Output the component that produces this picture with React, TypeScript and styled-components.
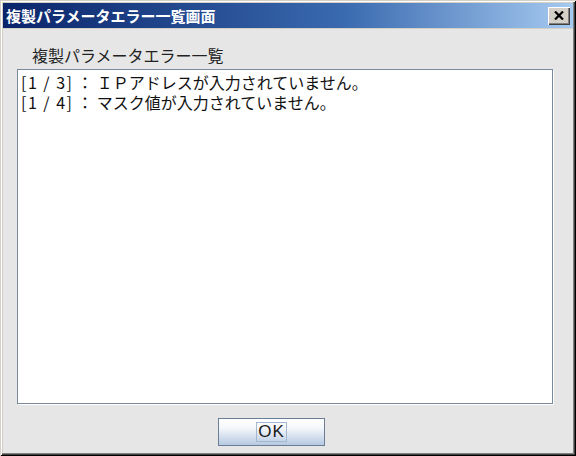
import React from 'react'
import styled, { createGlobalStyle } from 'styled-components'

const GlobalStyle = createGlobalStyle`
  html, body {
    margin: 0;
    padding: 0;
    background: #d4d0c8;
  }
  body {
    font-family: "Noto Sans CJK JP", "Noto Sans", sans-serif;
  }
`

const Window = styled.div`
  width: 576px;
  height: 456px;
  box-sizing: border-box;
  display: flex;
  flex-direction: column;
  background: #d4d0c8;
  padding: 3px;
  box-shadow:
    inset 1px 1px 0 #d4d0c8,
    inset -1px -1px 0 #000000,
    inset 2px 2px 0 #ffffff,
    inset -2px -2px 0 #404040,
    inset -3px -3px 0 #808080;
`

const TitleBar = styled.div`
  height: 25px;
  flex: none;
  display: flex;
  align-items: center;
  justify-content: space-between;
  padding: 0 3px;
  background: linear-gradient(to right, #0a246a 0%, #3a6ab0 60%, #a6caf0 100%);
`

const Title = styled.span`
  color: #ffffff;
  font-weight: 700;
  font-size: 15px;
  line-height: 25px;
`

const CloseButton = styled.button`
  width: 22px;
  height: 18px;
  padding: 0;
  margin: 0;
  border: none;
  background: #d4d0c8;
  display: flex;
  align-items: center;
  justify-content: center;
  box-shadow:
    inset 1px 1px 0 #ffffff,
    inset -1px -1px 0 #404040,
    inset -2px -2px 0 #808080;
`

const Body = styled.div`
  flex: 1;
  display: flex;
  flex-direction: column;
  background: #e6e6e6;
  padding: 0 20px 0 14px;
  border-top: 1px solid #d4d0c8;
`

const Caption = styled.div`
  font-size: 16px;
  line-height: 20px;
  color: #222222;
  padding: 16px 0 4px 15px;
`

const MessageList = styled.div`
  height: 335px;
  box-sizing: border-box;
  background: #ffffff;
  border: 1px solid #7a8a9c;
  box-shadow: 1px 1px 0 #ffffff;
  padding: 2px 3px;
  font-size: 16px;
  line-height: 20px;
  color: #111111;
`

const MessageLine = styled.div`
  white-space: pre;
`

const Index = styled.span`
  letter-spacing: 1.5px;
`

const ButtonRow = styled.div`
  display: flex;
  justify-content: center;
  padding: 14px 27px 0 0;
`

const OkButton = styled.button`
  width: 107px;
  height: 28px;
  box-sizing: border-box;
  border: 1px solid #6b7e95;
  background: linear-gradient(to bottom, #ffffff 0%, #f4f7fb 35%, #b6c9e2 100%);
  display: flex;
  align-items: center;
  justify-content: center;
  padding: 0;
  cursor: pointer;
`

const FocusLabel = styled.span`
  border: 1px solid #a4b8d0;
  padding: 0 1px;
  font-family: "Liberation Sans", sans-serif;
  font-size: 17px;
  line-height: 18px;
  letter-spacing: 1px;
  color: #1a1a1a;
`

const errors = [
  { index: '[1 / 3]', text: ' ： ＩＰアドレスが入力されていません。' },
  { index: '[1 / 4]', text: ' ： マスク値が入力されていません。' },
]

const App: React.FunctionComponent = () => {
  return (
    <>
      <GlobalStyle />
      <Window>
        <TitleBar>
          <Title>複製パラメータエラー一覧画面</Title>
          <CloseButton aria-label="close">
            <svg width="10" height="9" viewBox="0 0 10 9">
              <path d="M1 0.5 L9 8.5 M9 0.5 L1 8.5" stroke="#000" strokeWidth="2.2" />
            </svg>
          </CloseButton>
        </TitleBar>
        <Body>
          <Caption>複製パラメータエラー一覧</Caption>
          <MessageList>
            {errors.map((e) => (
              <MessageLine key={e.index}>
                <Index>{e.index}</Index>
                {e.text}
              </MessageLine>
            ))}
          </MessageList>
          <ButtonRow>
            <OkButton>
              <FocusLabel>OK</FocusLabel>
            </OkButton>
          </ButtonRow>
        </Body>
      </Window>
    </>
  )
}

export default App
